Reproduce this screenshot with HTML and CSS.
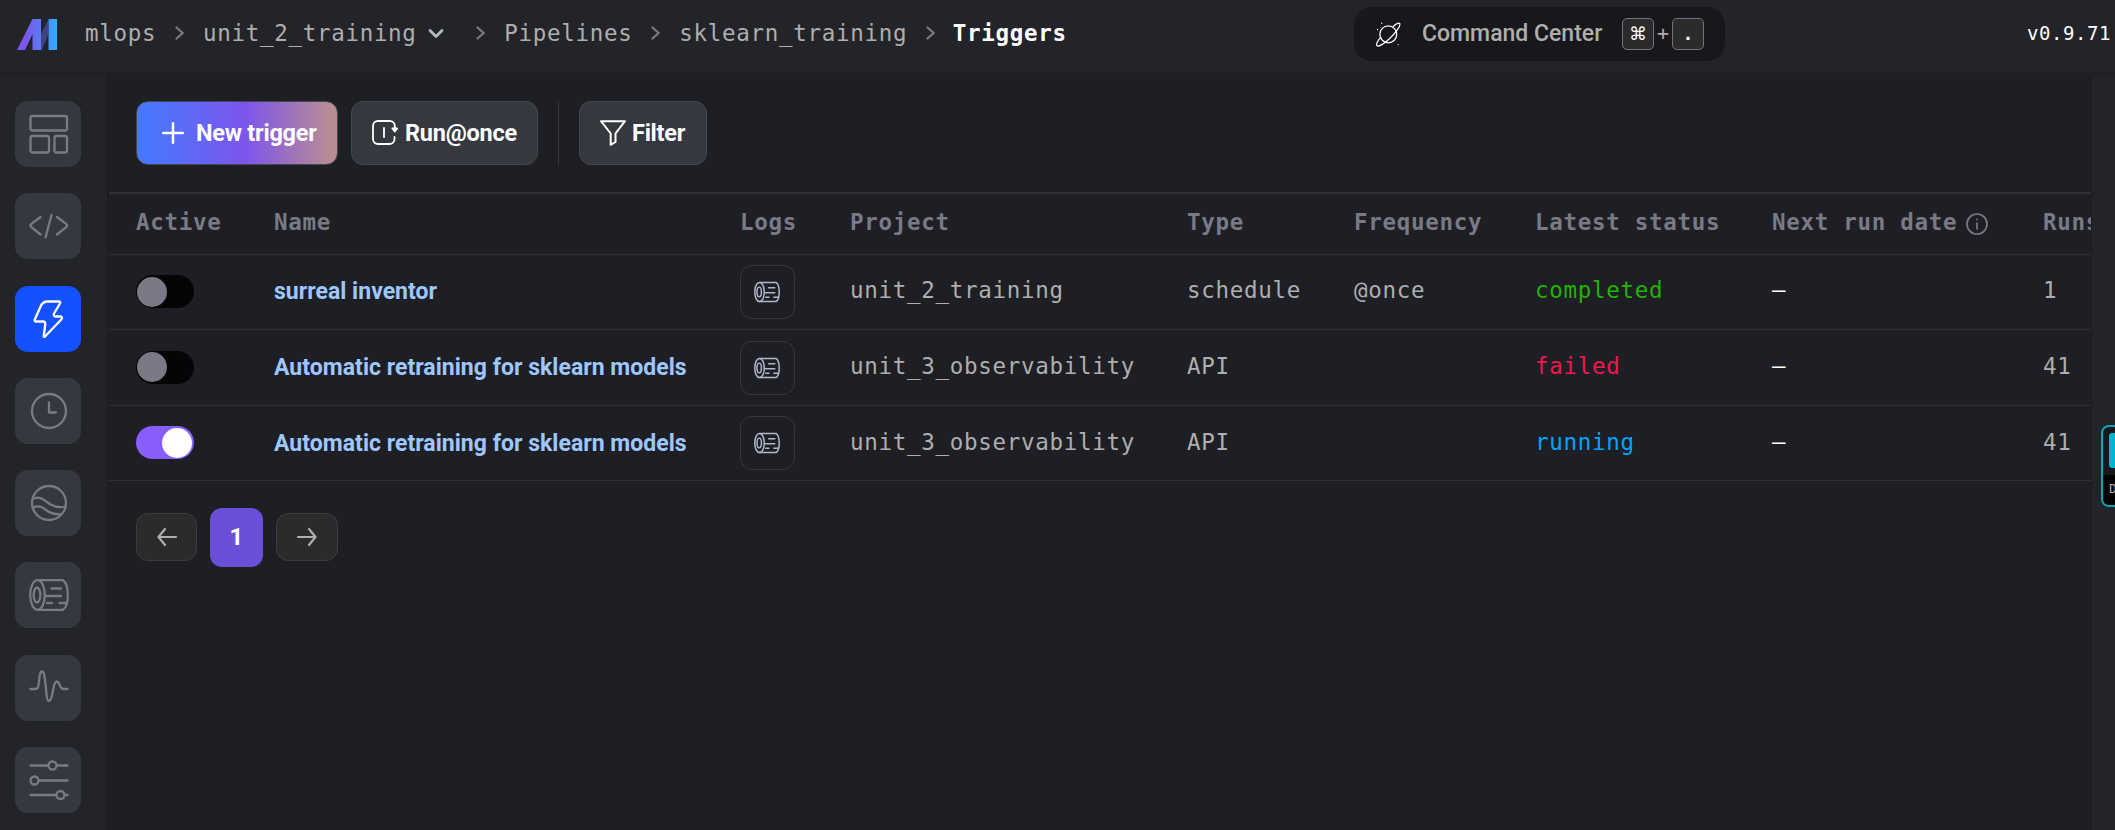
FILE: index.html
```html
<!DOCTYPE html>
<html lang="en">
<head>
<meta charset="utf-8">
<title>Triggers</title>
<link rel="stylesheet" href="styles.css">
</head>
<body>
<svg class="defs" width="0" height="0" aria-hidden="true">
  <symbol id="log" viewBox="0 0 40 32">
    <g fill="none" stroke="currentColor" stroke-width="2.300" stroke-linecap="round">
      <ellipse cx="8.500" cy="16" rx="7.300" ry="14.800"/>
      <ellipse cx="8" cy="16" rx="3.400" ry="7.500"/>
      <path d="M8.500 1.200H34c3 2 4.800 8.300 4.800 14.800s-1.800 12.800-4.800 14.800H8.500M22.500 9.500h9.500M16.500 17h15.500M18 24h5M30.500 24h6.500"/>
    </g>
  </symbol>
  <symbol id="chev" viewBox="0 0 10 14"><path d="M1.500 1.500 7.700 7l-6.200 5.500" fill="none" stroke="currentColor" stroke-width="2.300" stroke-linecap="round" stroke-linejoin="round"/></symbol>
</svg>

<header class="topbar">
  <svg class="logo" viewBox="0 0 40 31">
    <defs>
      <linearGradient id="lg" x1="0" y1="0" x2="40" y2="0" gradientUnits="userSpaceOnUse"><stop offset="0.200" stop-color="#7d55ec"/><stop offset="0.600" stop-color="#5a7bf4"/><stop offset="1" stop-color="#2fb0ff"/></linearGradient>
    </defs>
    <path d="M24 31V15L31 1V16L25 31z" fill="#3f4380"/>
    <path d="M0 31 15.500 0H24V31h-8.500V15L8 31zM31.500 0H40V31h-8.500z" fill="url(#lg)"/>
  </svg>
  <nav class="crumbs">
    <span>mlops</span>
    <span class="sep"><svg><use href="#chev"/></svg></span>
    <span>unit_2_training</span>
    <svg class="down" viewBox="0 0 16 12"><path d="M2 2.500 8 8.500l6-6" fill="none" stroke="#b4b8c0" stroke-width="2.800" stroke-linecap="round" stroke-linejoin="round"/></svg>
    <span class="sep"><svg><use href="#chev"/></svg></span>
    <span>Pipelines</span>
    <span class="sep"><svg><use href="#chev"/></svg></span>
    <span>sklearn_training</span>
    <span class="sep"><svg><use href="#chev"/></svg></span>
    <span class="current">Triggers</span>
  </nav>
  <div class="command">
    <svg class="planet" viewBox="0 0 26 26" fill="none" stroke="#fff" stroke-width="1.300" stroke-linecap="round">
      <circle cx="12.800" cy="12.800" r="8.800"/>
      <path d="M18 4.500C21 2 24 .800 24.700 1.600 26 3.500 20.500 11.500 14 17.500 8.500 22.700 2.500 26 1.200 24.800 0 23.500 1.800 19.500 4.800 16"/>
      <path d="M6 1.200v.100M1.600 7.700v.100M23 23.400v.100"/>
    </svg>
    <span class="command-label">Command Center</span>
    <span class="keys"><kbd class="cmd">⌘</kbd><i>+</i><kbd>.</kbd></span>
  </div>
  <span class="version">v0.9.71</span>
</header>

<div class="body">
  <aside class="sidebar">
    <a class="side"><svg viewBox="0 0 40 40"><rect x="1.500" y="2" width="36.500" height="14.500" rx="2"/><rect x="1.500" y="22" width="18.500" height="16.500" rx="2"/><rect x="25.500" y="22" width="12.500" height="16.500" rx="2"/></svg></a>
    <a class="side"><svg viewBox="0 0 40 40"><path d="M11.500 11 2 18.200q-1.300 1.300 0 2.600L11.500 28.500M28 11l9.500 7.200q1.300 1.300 0 2.600L28 28.500M22.500 9 16.500 31.500"/></svg></a>
    <a class="side on"><svg viewBox="0 0 40 40"><path d="M12.500 5.500Q15 2.500 18 2.500h11.500q2.500 0 1.500 2l-6 10q-1 2.500 1.500 3h5q2.500.500.800 3L16 37.500q-1.500 1-1.200-1l1.500-11.500q0-2.500-2.300-2.500H6.500q-1.500-.800-.500-2.500z"/></svg></a>
    <a class="side"><svg viewBox="0 0 40 40"><circle cx="20" cy="20" r="17"/><path d="M20 11.500V21.500h7"/></svg></a>
    <a class="side"><svg viewBox="0 0 40 40"><circle cx="20" cy="20" r="17"/><path d="M4.500 15.500c8-3 12 3 17 6 5 2.800 9 3.300 15 2M4 24.500c6-2.500 9-.5 13 2.500 4.500 3.500 9 4.500 14.500 4.200"/></svg></a>
    <a class="side"><svg class="log"><use href="#log"/></svg></a>
    <a class="side"><svg viewBox="0 0 40 40"><path d="M1.500 21H6.500C12 21 8.500 3.500 13.200 3.500c4 0 3.200 29.500 6.500 29.500 4.500 0 4-19.500 7.800-19.500C31.500 13.500 30 21 34.500 21H38.500"/></svg></a>
    <a class="side"><svg viewBox="0 0 40 40"><path d="M1.500 5.500H19M28 5.500h10.500M10 20.500h28.500M1.500 35H27M35.500 35h3"/><circle cx="23.500" cy="5.500" r="4"/><circle cx="5.500" cy="20.500" r="4"/><circle cx="31.500" cy="35" r="4"/></svg></a>
  </aside>

  <main class="main">
    <div class="toolbar">
      <button class="btn new"><svg width="22" height="22" viewBox="0 0 22 22"><path d="M11 1.200V20.800M1.200 11H20.800" stroke="#fff" stroke-width="2.500" stroke-linecap="round"/></svg><span>New trigger</span></button>
      <button class="btn run"><svg width="26" height="26" viewBox="0 0 26 26" fill="none" stroke="#fff" stroke-width="1.800" stroke-linecap="round" stroke-linejoin="round"><path d="M22.800 10V6a5 5 0 0 0-5-5H6a5 5 0 0 0-5 5V19a5 5 0 0 0 5 5H17.500a5 5 0 0 0 5-5V17M12 8V17"/><path d="M20.300 8.500 22.800 11.500 25.200 8.500z" fill="#fff"/></svg><span>Run@once</span></button>
      <div class="divider"></div>
      <button class="btn filter"><svg width="26" height="26" viewBox="0 0 26 26" fill="none" stroke="#fff" stroke-width="2" stroke-linejoin="round"><path d="M1 1.200H25L15.500 13.500V22L10.700 24.800V13.500z"/></svg><span>Filter</span></button>
    </div>

    <div class="table">
      <div class="row head">
        <span>Active</span><span>Name</span><span>Logs</span><span>Project</span><span>Type</span><span>Frequency</span><span>Latest status</span>
        <span class="next">Next run date<svg viewBox="0 0 22 22" fill="none" stroke="currentColor" stroke-width="1.700" stroke-linecap="round"><circle cx="11" cy="11" r="10"/><path d="M11 10v6M11 6.300v.300"/></svg></span><span>Runs</span>
      </div>
      <div class="row r1">
        <span class="toggle"></span><a class="name">surreal inventor</a><span class="logbtn"><svg><use href="#log"/></svg></span><span>unit_2_training</span><span>schedule</span><span>@once</span><span class="completed">completed</span><span class="dash">—</span><span>1</span>
      </div>
      <div class="row r2">
        <span class="toggle"></span><a class="name">Automatic retraining for sklearn models</a><span class="logbtn"><svg><use href="#log"/></svg></span><span>unit_3_observability</span><span>API</span><span></span><span class="failed">failed</span><span class="dash">—</span><span>41</span>
      </div>
      <div class="row r3">
        <span class="toggle checked"></span><a class="name">Automatic retraining for sklearn models</a><span class="logbtn"><svg><use href="#log"/></svg></span><span>unit_3_observability</span><span>API</span><span></span><span class="running">running</span><span class="dash">—</span><span>41</span>
      </div>
    </div>

    <div class="pager">
      <button class="page"><svg viewBox="0 0 20 20"><path d="M19 10H2M8 2 1.500 10 8 18"/></svg></button>
      <button class="page active">1</button>
      <button class="page forward"><svg viewBox="0 0 20 20"><path d="M1 10H18M12 2l6.500 8L12 18"/></svg></button>
    </div>
  </main>
  <div class="rail"></div>
</div>
<div class="widget"><div class="widget-top"><b></b></div><div class="widget-label">D</div></div>
</body>
</html>
```

FILE: styles.css
```css
* { box-sizing: border-box; }
body {
  margin: 0;
  width: 2115px;
  height: 830px;
  overflow: hidden;
  position: relative;
  background: #1e1f24;
  color: #aeaeae;
  font-family: "DejaVu Sans Mono", monospace;
  font-size: 22.5px;
  letter-spacing: 0.7px;
  line-height: 30px;
}
.defs { display: block; height: 0; }
svg { display: block; flex: none; }
span { white-space: pre; }

.topbar {
  height: 74px;
  display: flex;
  align-items: flex-start;
  background: #232429;
  border-bottom: 1px solid #1b1c20;
}
.logo { width: 40px; height: 31px; margin: 19px 0 0 17px; }
.crumbs { display: flex; align-items: center; height: 30px; margin: 18px 0 0 28px; width: 1269px; flex: none; }
.sep { width: 46.7px; display: flex; justify-content: center; color: #797a86; }
.sep svg { width: 10px; height: 14px; margin-left: 1px; }
.down { width: 16px; height: 12px; margin: 2px 14px 0 11px; }
.current { color: #fff; font-weight: 700; margin-left: -1px; }
.command {
  width: 371px; height: 54px; margin-top: 7px; padding: 0 21px 0 22px;
  display: flex; align-items: center; flex: none;
  background: #18181c; border-radius: 18px;
}
.planet { width: 25px; height: 25px; }
.command-label { font: 500 23px/30px Roboto, sans-serif; letter-spacing: 0; margin: 0 0 0 21px; width: 200px; }
.keys { display: flex; align-items: center; margin-left: auto; }
.keys i { width: 18px; text-align: center; font: 400 20px/30px "DejaVu Sans Mono", monospace; letter-spacing: 0; margin-top: -2px; }
kbd {
  width: 32px; height: 32px; border: 1px solid #70747c; border-radius: 5px; background: #2b2b2b;
  color: #fff; font: 700 18px/30px "DejaVu Sans Mono", monospace; letter-spacing: 0; text-align: center;
}
kbd.cmd { font: 400 18px/29px "DejaVu Sans", sans-serif; }
.version { margin: 18px 0 0 302px; color: #fff; font-size: 19px; letter-spacing: 0.55px; }

.body { display: flex; height: 756px; }
.sidebar {
  width: 108px; flex: none; padding: 27px 0 0 15px;
  display: flex; flex-direction: column; gap: 26.3px;
  background: #232429; border-right: 1px solid #1b1c20;
}
.side {
  width: 66px; height: 66px; flex: none; border-radius: 13px;
  display: flex; align-items: center; justify-content: center;
  background: #35383f; color: #797a86;
}
.side svg { width: 40px; height: 40px; margin-left: 2px; fill: none; stroke: currentColor; stroke-width: 2.3; stroke-linecap: round; stroke-linejoin: round; }
.side svg.log { height: 32px; }
.side.on { background: #1651ff; color: #fff; }

.main { width: 1983px; flex: none; overflow: hidden; padding-left: 1px; }
.rail { flex: 1; background: #232429; border-left: 1px solid #1b1c20; }
.toolbar { display: flex; padding: 27px 0 0 27px; height: 118px; }
.btn {
  height: 64px; margin: 0; padding: 0; border: 1px solid #45474f; border-radius: 12px;
  display: flex; align-items: center; background: #35383f;
  color: #fff; font: 700 23.5px/30px Roboto, sans-serif; letter-spacing: -0.25px; white-space: nowrap;
}
.btn span { margin-top: -1px; }
.new { width: 202px; padding-left: 25px; gap: 12px; background: linear-gradient(90deg, #4877ff 5%, #7d55ec 54%, #b98d92 97%); }
.run { width: 187px; margin-left: 13px; padding-left: 20px; gap: 7px; }
.divider { width: 1px; height: 64px; margin: 0 20px 0 20px; background: #35373d; }
.filter { width: 128px; padding-left: 20px; gap: 6px; }

.table { width: 2100px; }
.row {
  display: grid; align-items: center; height: 76px;
  grid-template-columns: 138px 466px 110px 337px 167px 181px 237px 271px 100px;
  padding-left: 27px; border-bottom: 1px solid #2e3035;
}
.head { height: 63px; border-top: 2px solid #2e3035; color: #797a86; font-weight: 700; }
.r1, .r3 { height: 75px; }
.row > span:not(.toggle):not(.logbtn) { margin-top: -4px; }
.r3 > span:not(.toggle):not(.logbtn) { position: relative; top: 1px; }
.r3 .name { padding-top: 2px; }
.next { display: flex; align-items: center; }
.next svg { width: 22px; height: 22px; margin: 3px 0 0 9px; }
.name { color: #9ec7ff; font: 700 23px/30px Roboto, sans-serif; letter-spacing: 0.03px; white-space: nowrap; }
.toggle { width: 58px; height: 33px; border-radius: 17px; background: #050505; padding: 1.5px; display: flex; margin-bottom: 1px; }
.toggle::before { content: ""; width: 30px; height: 30px; border-radius: 50%; background: #797a86; margin-left: -1px; }
.checked { background: #885eff; justify-content: flex-end; }
.checked::before { background: #fff; margin: 0 1px 0 0; }
.logbtn { width: 55px; height: 54px; border: 1px solid #35373d; border-radius: 12px; display: flex; align-items: center; justify-content: center; color: #aeb8cc; }
.logbtn svg { width: 26px; height: 22px; margin-right: 1px; }
.completed { color: #24b200; }
.failed { color: #ee1750; }
.running { color: #00a4fb; }
.dash { color: #fff; }

.pager { display: flex; align-items: center; gap: 13px; padding: 27px 0 0 27px; }
.page {
  width: 61px; height: 48px; padding: 0; margin: -1px 0 0; border: 1px solid #3c3c3c; border-radius: 12px;
  display: flex; align-items: center; justify-content: center; background: #2b2b2b;
}
.page.forward { width: 62px; }
.page svg { width: 20px; height: 20px; fill: none; stroke: #aeaeae; stroke-width: 2.2; stroke-linecap: round; stroke-linejoin: round; }
.page.active { width: 53px; height: 59px; margin: 0; border: 0; background: #6b50d7; color: #fff; font: 700 24px/30px Roboto, sans-serif; padding-bottom: 2px; }

.widget {
  position: absolute; left: 2101px; top: 425px; width: 40px; height: 82px;
  border: 2px solid #0aa5ba; border-radius: 8px; overflow: hidden; background: #18181c;
}
.widget-top { height: 48px; padding: 6px 0 0 6px; }
.widget-top b { display: block; width: 30px; height: 35px; border-radius: 3px; background: #00b5cf; }
.widget-label { height: 32px; background: #000; padding-left: 6px; color: #aeaeae; font-size: 13px; line-height: 28px; }
```
